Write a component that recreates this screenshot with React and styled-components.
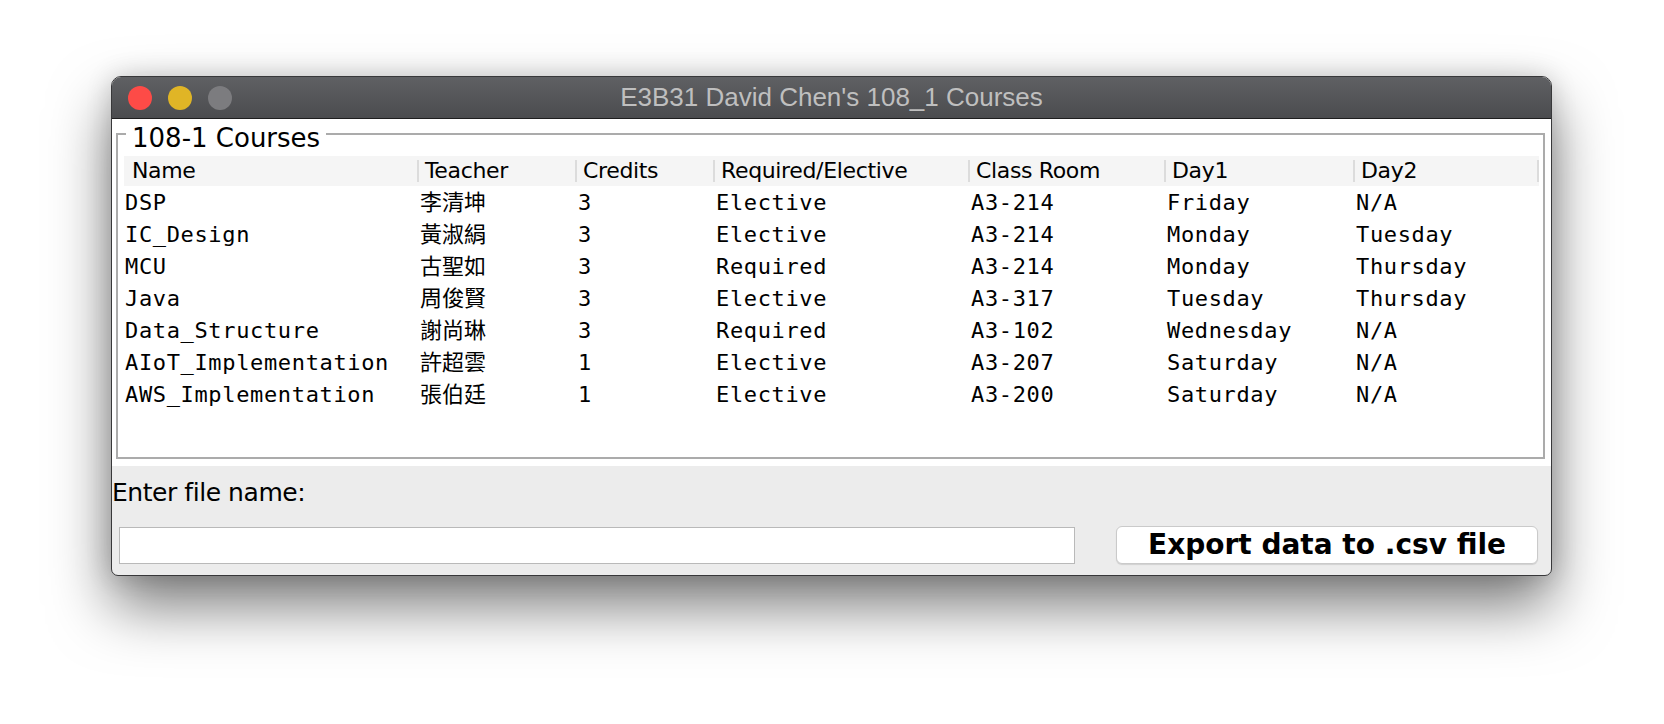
import React from 'react';
import styled, { createGlobalStyle } from 'styled-components';

const GlobalStyle = createGlobalStyle`
  html, body { margin: 0; padding: 0; background: #ffffff; }
  body { font-family: "DejaVu Sans", "Noto Sans CJK TC", sans-serif; }
  * { box-sizing: border-box; }
`;

const columns = [
  { key: 'name', label: 'Name', width: 293, first: true },
  { key: 'teacher', label: 'Teacher', width: 158, cjk: true },
  { key: 'credits', label: 'Credits', width: 138 },
  { key: 'type', label: 'Required/Elective', width: 255 },
  { key: 'room', label: 'Class Room', width: 196 },
  { key: 'day1', label: 'Day1', width: 189 },
  { key: 'day2', label: 'Day2', width: 186 },
];

const rows = [
  { name: 'DSP', teacher: '李清坤', credits: '3', type: 'Elective', room: 'A3-214', day1: 'Friday', day2: 'N/A' },
  { name: 'IC_Design', teacher: '黃淑絹', credits: '3', type: 'Elective', room: 'A3-214', day1: 'Monday', day2: 'Tuesday' },
  { name: 'MCU', teacher: '古聖如', credits: '3', type: 'Required', room: 'A3-214', day1: 'Monday', day2: 'Thursday' },
  { name: 'Java', teacher: '周俊賢', credits: '3', type: 'Elective', room: 'A3-317', day1: 'Tuesday', day2: 'Thursday' },
  { name: 'Data_Structure', teacher: '謝尚琳', credits: '3', type: 'Required', room: 'A3-102', day1: 'Wednesday', day2: 'N/A' },
  { name: 'AIoT_Implementation', teacher: '許超雲', credits: '1', type: 'Elective', room: 'A3-207', day1: 'Saturday', day2: 'N/A' },
  { name: 'AWS_Implementation', teacher: '張伯廷', credits: '1', type: 'Elective', room: 'A3-200', day1: 'Saturday', day2: 'N/A' },
];

const gridCols = columns.map((c) => `${c.width}px`).join(' ');

const Page = styled.div`
  width: 1664px;
  height: 724px;
  padding: 76px 0 0 111px;
  overflow: hidden;
`;

const Window = styled.div`
  width: 1441px;
  height: 500px;
  display: flex;
  flex-direction: column;
  border: 1px solid #38383a;
  border-radius: 10px 10px 7px 7px;
  overflow: hidden;
  background: #ececec;
  box-shadow: 0 30px 60px rgba(0, 0, 0, 0.52), 0 0 26px rgba(0, 0, 0, 0.16);
`;

const TitleBar = styled.div`
  flex: 0 0 42px;
  display: grid;
  grid-template-columns: 1fr auto 1fr;
  align-items: center;
  padding: 0 16px;
  background: linear-gradient(#5f6063, #4b4c4f);
  border-bottom: 1px solid #1e1e1f;
`;

const Lights = styled.div`
  display: flex;
  gap: 16px;
`;

const Light = styled.span`
  width: 24px;
  height: 24px;
  border-radius: 50%;
  background: ${(p) => p.$color};
`;

const Title = styled.div`
  font-family: "Liberation Sans", Arial, sans-serif;
  font-size: 26px;
  color: #bfbfbf;
  white-space: nowrap;
`;

const Panel = styled.div`
  flex: 0 0 347px;
  display: flex;
  flex-direction: column;
  background: #ffffff;
  padding: 0 6px 7px 4px;
`;

const Group = styled.fieldset`
  flex: 1;
  min-height: 0;
  min-width: 0;
  margin: 0;
  border: 2px solid #ababab;
  padding: 7px 4px 0 6px;
`;

const GroupTitle = styled.legend`
  margin-left: 2px;
  padding: 9px 6px 0 6px;
  font-family: "DejaVu Sans", sans-serif;
  font-size: 26px;
  line-height: 21px;
  color: #000;
`;

const HeaderRow = styled.div`
  display: grid;
  grid-template-columns: ${(p) => p.$cols};
  height: 30px;
  background: #f5f5f5;
`;

const HeaderCell = styled.div`
  display: flex;
  align-items: center;
  height: 30px;
  ${(p) =>
    p.$last &&
    `
    &::after {
      content: "";
      margin-left: auto;
      width: 2px;
      height: 22px;
      background: #dcdcdc;
    }
  `}
`;

const HeaderLabel = styled.span`
  height: 22px;
  line-height: 22px;
  padding-left: ${(p) => (p.$first ? '8px' : '6px')};
  border-left: ${(p) => (p.$first ? 'none' : '2px solid #dcdcdc')};
  font-family: "DejaVu Sans", sans-serif;
  font-size: 22px;
  letter-spacing: -0.35px;
  color: #000;
  white-space: nowrap;
`;

const BodyRow = styled.div`
  display: grid;
  grid-template-columns: ${(p) => p.$cols};
  height: 32px;
`;

const Cell = styled.div`
  padding: 1px 0 0 ${(p) => (p.$first ? '1px' : '3px')};
  line-height: 31px;
  font-family: "DejaVu Sans Mono", "Noto Sans CJK TC", monospace;
  font-size: 22px;
  letter-spacing: ${(p) => (p.$cjk ? '0' : '0.65px')};
  color: #000;
  white-space: nowrap;
  overflow: hidden;
`;

const BottomArea = styled.div`
  flex: 1;
  display: flex;
  flex-direction: column;
  padding: 12px 0 11px 0;
`;

const FieldLabel = styled.label`
  font-family: "DejaVu Sans", sans-serif;
  font-size: 25px;
  letter-spacing: -0.45px;
  line-height: 30px;
  color: #000;
`;

const Controls = styled.div`
  margin-top: 18px;
  display: flex;
  align-items: center;
  gap: 41px;
  padding: 0 13px 0 7px;
`;

const FileInput = styled.input`
  flex: 0 0 956px;
  height: 37px;
  border: 1px solid #b9b9b9;
  background: #ffffff;
  outline: none;
  padding: 0 6px;
  font-family: "DejaVu Sans", sans-serif;
  font-size: 22px;
`;

const ExportButton = styled.button`
  flex: 0 0 422px;
  height: 38px;
  padding: 0;
  background: #ffffff;
  border: 1px solid #cacaca;
  border-radius: 6px;
  box-shadow: 0 1px 1px rgba(0, 0, 0, 0.12);
  font-family: "DejaVu Sans", sans-serif;
  font-weight: bold;
  font-size: 28px;
  line-height: 36px;
  color: #000;
`;

export default function App() {
  return (
    <>
      <GlobalStyle />
      <Page>
        <Window>
          <TitleBar>
            <Lights>
              <Light $color="#fd4b47" />
              <Light $color="#e0b526" />
              <Light $color="#7c7c7f" />
            </Lights>
            <Title>E3B31 David Chen's 108_1 Courses</Title>
            <span />
          </TitleBar>
          <Panel>
            <Group>
              <GroupTitle>108-1 Courses</GroupTitle>
              <HeaderRow $cols={gridCols}>
                {columns.map((c, i) => (
                  <HeaderCell key={c.key} $last={i === columns.length - 1}>
                    <HeaderLabel $first={c.first}>{c.label}</HeaderLabel>
                  </HeaderCell>
                ))}
              </HeaderRow>
              {rows.map((r) => (
                <BodyRow key={r.name} $cols={gridCols}>
                  {columns.map((c) => (
                    <Cell key={c.key} $cjk={c.cjk} $first={c.first}>
                      {r[c.key]}
                    </Cell>
                  ))}
                </BodyRow>
              ))}
            </Group>
          </Panel>
          <BottomArea>
            <FieldLabel>Enter file name:</FieldLabel>
            <Controls>
              <FileInput type="text" />
              <ExportButton>Export data to .csv file</ExportButton>
            </Controls>
          </BottomArea>
        </Window>
      </Page>
    </>
  );
}
